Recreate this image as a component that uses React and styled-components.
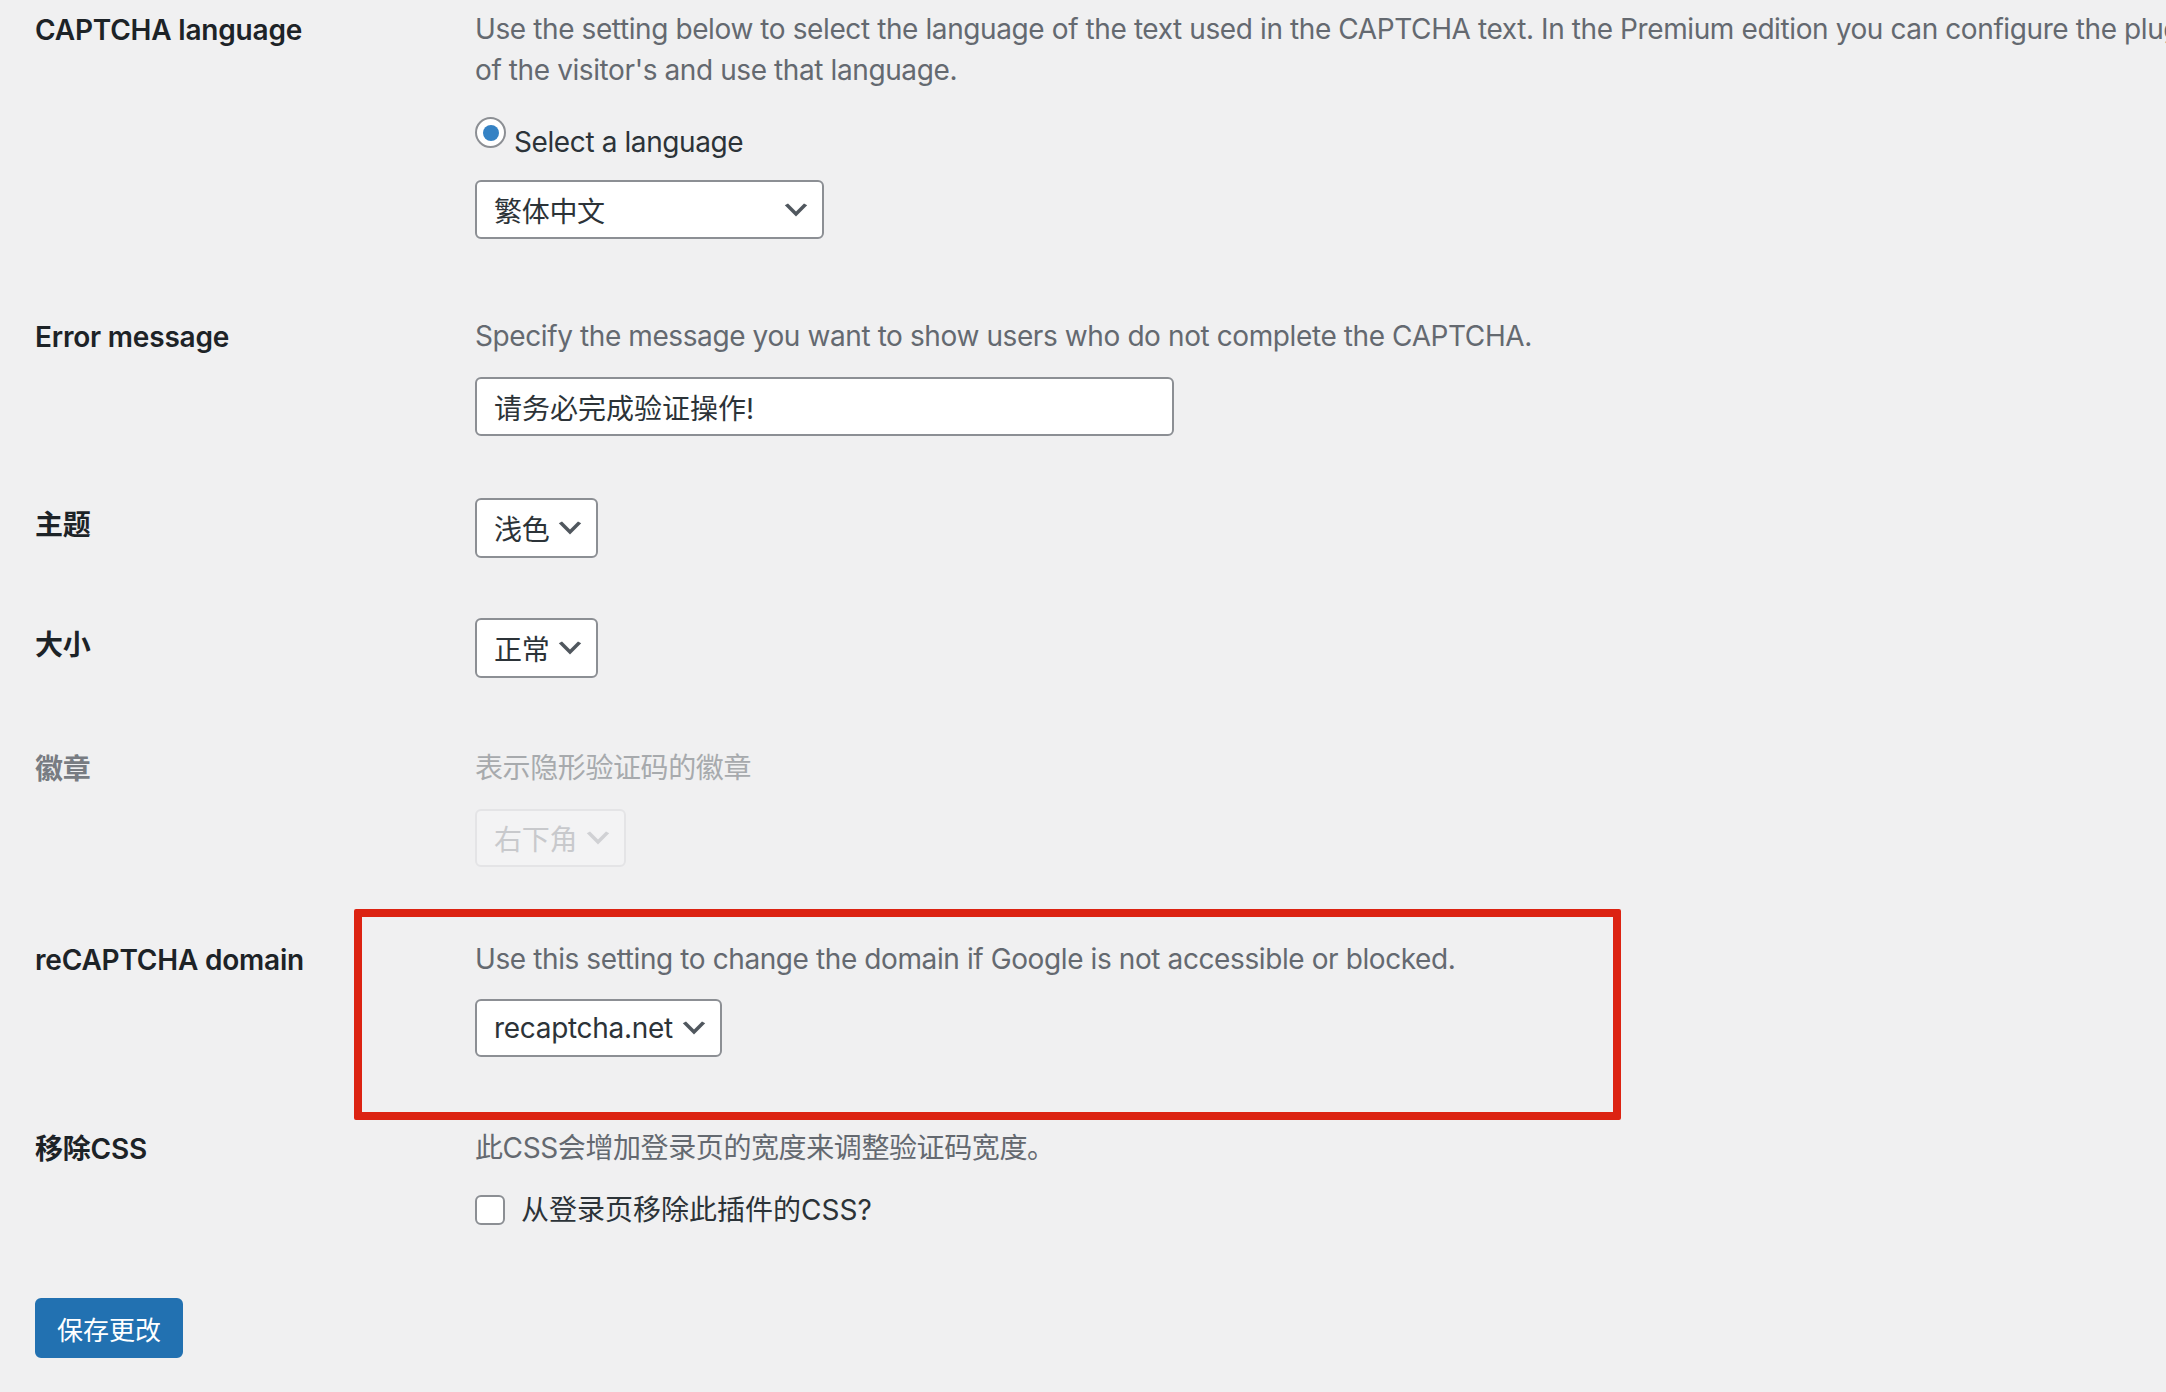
import React from "react";
import styled, { createGlobalStyle } from "styled-components";

const font = `Inter, "Noto Sans CJK SC", sans-serif`;

const GlobalStyle = createGlobalStyle`
  html, body {
    margin: 0;
    padding: 0;
    background: #f0f0f1;
    overflow: hidden;
  }
  body {
    font-family: ${font};
    color: #1d2327;
  }
`;

const Page = styled.div`
  width: 2166px;
  height: 1392px;
  padding: 9px 0 0 35px;
  box-sizing: border-box;
  display: flex;
  flex-direction: column;
  overflow: hidden;
`;

const Row = styled.div`
  position: relative;
  display: grid;
  grid-template-columns: 440px 1fr;
  align-items: start;
  padding-top: ${(p) => p.$pt || 0}px;
`;

const Label = styled.div`
  font-size: 28px;
  line-height: 42px;
  font-weight: 600;
  letter-spacing: -0.2px;
  margin-top: ${(p) => p.$mt || 0}px;
  color: ${(p) => (p.$muted ? "#787c82" : "#1d2327")};
  white-space: nowrap;
`;

const Field = styled.div`
  display: flex;
  flex-direction: column;
  align-items: flex-start;
`;

const Desc = styled.p`
  margin: 0;
  font-size: 28px;
  line-height: 41px;
  letter-spacing: -0.4px;
  color: ${(p) => (p.$muted ? "#a7aaad" : "#646970")};
  white-space: nowrap;
`;

const RadioLine = styled.label`
  display: flex;
  align-items: flex-start;
  gap: 8px;
  margin-top: 26px;
  font-size: 28px;
  line-height: 42px;
  letter-spacing: -0.4px;
  color: #2c3338;
`;

const Radio = styled.span`
  width: 31px;
  height: 31px;
  box-sizing: border-box;
  border: 2px solid #8c8f94;
  border-radius: 50%;
  background: #fff;
  display: flex;
  align-items: center;
  justify-content: center;
  &::before {
    content: "";
    width: 16px;
    height: 16px;
    border-radius: 50%;
    background: #3582c4;
  }
`;

const RadioText = styled.span`
  margin-top: 4px;
`;

const Select = styled.div`
  display: inline-flex;
  align-items: center;
  box-sizing: border-box;
  height: ${(p) => p.$h || 60}px;
  width: ${(p) => (p.$w ? `${p.$w}px` : "auto")};
  margin-top: ${(p) => p.$mt || 0}px;
  padding: 0 10px 0 17px;
  gap: 5px;
  border: 2px solid ${(p) => (p.$disabled ? "#e4e4e6" : "#8c8f94")};
  border-radius: 6px;
  background: ${(p) => (p.$disabled ? "#f3f3f4" : "#fff")};
  color: ${(p) => (p.$disabled ? "#c8c9cc" : "#2c3338")};
  font-size: 28px;
  letter-spacing: -0.3px;
  white-space: nowrap;

  svg {
    margin-left: auto;
    flex: none;
  }
`;

const TextInput = styled.div`
  box-sizing: border-box;
  width: 699px;
  height: 59px;
  margin-top: 20px;
  padding: 0 17px;
  display: flex;
  align-items: center;
  border: 2px solid #8c8f94;
  border-radius: 6px;
  background: #fff;
  color: #2c3338;
  font-size: 28px;
`;

const CheckLine = styled.label`
  display: flex;
  align-items: center;
  gap: 16px;
  margin-top: 20px;
  font-size: 28px;
  line-height: 42px;
  color: #2c3338;
`;

const Checkbox = styled.span`
  width: 30px;
  height: 30px;
  box-sizing: border-box;
  border: 2px solid #8c8f94;
  border-radius: 6px;
  background: #fff;
`;

/* red annotation frame drawn over the domain row */
const Highlight = styled.div`
  position: absolute;
  left: 319px;
  top: 42px;
  width: 1267px;
  height: 211px;
  box-sizing: border-box;
  border: 8px solid #dc2312;
  border-radius: 2px;
  pointer-events: none;
`;

const SaveButton = styled.button`
  align-self: flex-start;
  margin-top: 67px;
  height: 60px;
  padding: 0 20px;
  border: 2px solid #2271b1;
  border-radius: 6px;
  background: #2271b1;
  color: #fff;
  font-family: ${font};
  font-size: 26px;
  cursor: pointer;
`;

const Chevron = ({ color = "#50575e" }) => (
  <svg width="32" height="32" viewBox="0 0 20 20" fill={color}>
    <path d="M5 6l5 5 5-5 2 1-7 7-7-7 2-1z" />
  </svg>
);

const Dropdown = ({ children, disabled, ...rest }) => (
  <Select $disabled={disabled} {...rest}>
    <span>{children}</span>
    <Chevron color={disabled ? "#d0d1d4" : "#50575e"} />
  </Select>
);

export default function App() {
  return (
    <>
      <GlobalStyle />
      <Page>
        {/* captcha language */}
        <Row>
          <Label>CAPTCHA language</Label>
          <Field>
            <Desc>
              Use the setting below to select the language of the text used in
              the CAPTCHA text. In the Premium edition you can configure the
              plugin to detect the language
              <br />
              of the visitor's and use that language.
            </Desc>
            <RadioLine>
              <Radio />
              <RadioText>Select a language</RadioText>
            </RadioLine>
            <Dropdown $w={349} $h={59} $mt={17}>
              繁体中文
            </Dropdown>
          </Field>
        </Row>

        {/* error message */}
        <Row $pt={77}>
          <Label>Error message</Label>
          <Field>
            <Desc>
              Specify the message you want to show users who do not complete
              the CAPTCHA.
            </Desc>
            <TextInput>请务必完成验证操作!</TextInput>
          </Field>
        </Row>

        <Row $pt={62}>
          <Label $mt={6}>主题</Label>
          <Field>
            <Dropdown>浅色</Dropdown>
          </Field>
        </Row>

        <Row $pt={60}>
          <Label $mt={6}>大小</Label>
          <Field>
            <Dropdown>正常</Dropdown>
          </Field>
        </Row>

        <Row $pt={70}>
          <Label $muted>徽章</Label>
          <Field>
            <Desc $muted>表示隐形验证码的徽章</Desc>
            <Dropdown disabled $h={58} $mt={20}>
              右下角
            </Dropdown>
          </Field>
        </Row>

        {/* recaptcha domain */}
        <Row $pt={72}>
          <Label>reCAPTCHA domain</Label>
          <Field>
            <Desc>
              Use this setting to change the domain if Google is not accessible
              or blocked.
            </Desc>
            <Dropdown $h={58} $mt={19}>
              recaptcha.net
            </Dropdown>
          </Field>
          <Highlight />
        </Row>

        <Row $pt={71}>
          <Label>移除CSS</Label>
          <Field>
            <Desc>此CSS会增加登录页的宽度来调整验证码宽度。</Desc>
            <CheckLine>
              <Checkbox />
              从登录页移除此插件的CSS?
            </CheckLine>
          </Field>
        </Row>

        <SaveButton>保存更改</SaveButton>
      </Page>
    </>
  );
}
